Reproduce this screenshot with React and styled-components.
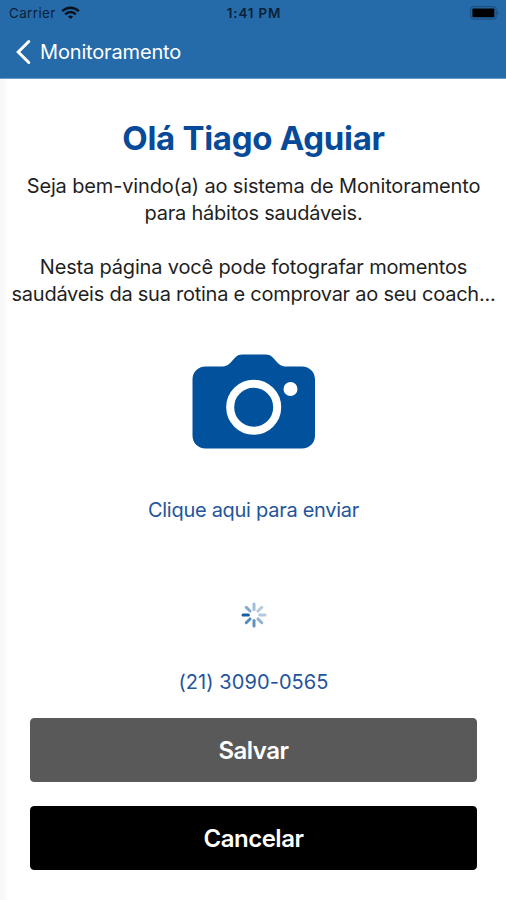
import React from 'react'
import styled, { createGlobalStyle } from 'styled-components'

const theme = {
    colors: {
        header: "#256ba9",
        primary: "#01519c",
        title: "#064a99",
        link: "#24559b",
        text: "#1f1f1f",
        grey: "#595959",
        black: "#000",
        white: "#fff",
    },
    font: "Inter, 'Liberation Sans', sans-serif",
}

// opacity of each spoke, clockwise from the top
const SPOKES = [0.4, 0.32, 0.32, 0.48, 0.68, 0.72, 1, 0.52]

export default function App() {
    return (
        <>
            <GlobalStyle />
            <Screen>
                <Header>
                    <StatusBar>
                        <Carrier>
                            <span>Carrier</span>
                            <WifiIcon />
                        </Carrier>
                        <Clock>1:41 PM</Clock>
                        <BatteryIcon />
                    </StatusBar>
                    <NavBar>
                        <BackIcon />
                        <NavTitle>Monitoramento</NavTitle>
                    </NavBar>
                </Header>
                <Content>
                    <Title>Olá Tiago Aguiar</Title>
                    <Intro>
                        <Line $spacing="-0.15px">Seja bem-vindo(a) ao sistema de Monitoramento</Line>
                        <Line $spacing="-0.23px">para hábitos saudáveis.</Line>
                        <Line />
                        <Line $spacing="-0.17px">Nesta página você pode fotografar momentos</Line>
                        <Line $spacing="-0.25px">saudáveis da sua rotina e comprovar ao seu coach...</Line>
                    </Intro>
                    <CameraButton aria-label="Fotografar"><CameraIcon /></CameraButton>
                    <SendLink>Clique aqui para enviar</SendLink>
                    <Loader />
                    <Phone>(21) 3090-0565</Phone>
                    <Actions>
                        <Button $color={theme.colors.grey}>Salvar</Button>
                        <Button $color={theme.colors.black}>Cancelar</Button>
                    </Actions>
                </Content>
            </Screen>
        </>
    )
}

function WifiIcon() {
    return (
        <svg width="19" height="14" viewBox="0 0 19 14" fill="none" stroke="#06131f">
            <path d="M1.2 5.2C5.9.5 13.1.5 17.8 5.2" strokeWidth="2.5" />
            <path d="M4.2 8.3C7.2 5.3 11.8 5.3 14.8 8.3" strokeWidth="2.4" />
            <path d="M9.5 13L6.9 10.5C8.3 9.1 10.7 9.1 12.1 10.5Z" fill="#06131f" stroke="none" />
        </svg>
    )
}

function BatteryIcon() {
    return (
        <svg width="29" height="14" viewBox="0 0 29 14">
            <rect x="0.6" y="0.6" width="25.6" height="12.6" rx="3.4" fill="none" stroke="#1b5182" strokeWidth="1.2" />
            <rect x="2.4" y="2.5" width="22" height="8.8" rx="0.8" fill="#000" />
            <path d="M27.2 4.8Q28.6 5.6 28.6 6.9T27.2 9Z" fill="#1b5182" />
        </svg>
    )
}

function BackIcon() {
    return (
        <svg width="16" height="26" viewBox="0 0 16 26" fill="none" stroke="#fff" strokeWidth="3">
            <path d="M13.8 2.5L3.2 13L13.8 23.5" strokeLinecap="round" />
        </svg>
    )
}

function CameraIcon() {
    return (
        <svg width="124" height="96" viewBox="0 0 124 96">
            <path
                d="M13.5 12.5H29C34.5 12.5 36.5 11 40 7L42.5 4.2C45 1.5 47 .5 50.5 .5H73.5C77 .5 79 1.5 81.5 4.2L84 7C87.5 11 89.5 12.5 95 12.5H110C117.5 12.5 123 18 123 25.5V81.5C123 89 117.5 94.5 110 94.5H13.5C6 94.5 .5 89 .5 81.5V25.5C.5 18 6 12.5 13.5 12.5Z"
                fill={theme.colors.primary}
            />
            <circle cx="61.7" cy="53.3" r="23.5" fill="none" stroke="#fff" strokeWidth="8" />
            <circle cx="98.5" cy="35" r="7" fill="#fff" />
        </svg>
    )
}

function Loader() {
    return (
        <LoaderStyled viewBox="-13 -13 26 26">
            {SPOKES.map((opacity, i) => (
                <line
                    key={i}
                    y1="-5.6"
                    y2="-11"
                    transform={`rotate(${i * 45})`}
                    opacity={opacity}
                />
            ))}
        </LoaderStyled>
    )
}

const GlobalStyle = createGlobalStyle`
* {
    box-sizing: border-box;
}
body {
    margin: 0;
    font-family: ${theme.font};
    background: ${theme.colors.white};
}
h1, p {
    margin: 0;
}
`;

const Screen = styled.div`
display: flex;
flex-direction: column;
width: 506px;
height: 900px;
overflow: hidden;
`;

const Header = styled.header`
height: 79px;
background: ${theme.colors.header};
border-bottom: 1px solid #6b9ac6;
`;

const StatusBar = styled.div`
display: grid;
grid-template-columns: 1fr auto 1fr;
align-items: center;
height: 26px;
padding: 0 7px 0 9px;
color: #0a2238;
font-size: 13.4px;
> svg {
    justify-self: end;
}
`;

const Carrier = styled.div`
display: flex;
align-items: center;
gap: 5px;
letter-spacing: 0.4px;
`;

const Clock = styled.span`
font-weight: 600;
letter-spacing: 0.85px;
`;

const NavBar = styled.div`
display: flex;
align-items: center;
gap: 9px;
height: 52px;
padding-left: 15px;
`;

const NavTitle = styled.span`
color: ${theme.colors.white};
font-size: 20px;
line-height: 26px;
letter-spacing: -0.16px;
`;

const Content = styled.main`
display: flex;
flex: 1;
flex-direction: column;
align-items: center;
padding-left: 1px;
background: linear-gradient(to right, #f7f7f7, #f9f9f9 4px, #fff 8px);
`;

const Title = styled.h1`
margin-top: 39px;
color: ${theme.colors.title};
font-size: 33px;
line-height: 40px;
font-weight: 700;
letter-spacing: -0.3px;
white-space: nowrap;
`;

const Intro = styled.div`
margin-top: 15px;
`;

const Line = styled.p`
height: 27px;
color: ${theme.colors.text};
font-size: 20px;
line-height: 27px;
text-align: center;
white-space: nowrap;
letter-spacing: ${({ $spacing }) => $spacing};
`;

const CameraButton = styled.button`
display: flex;
margin-top: 46px;
padding: 0;
border: 0;
background: none;
`;

const SendLink = styled.p`
margin-top: 46px;
color: ${theme.colors.link};
font-size: 20px;
line-height: 28px;
letter-spacing: -0.28px;
`;

const LoaderStyled = styled.svg`
width: 26px;
height: 26px;
margin-top: 78px;
stroke: #17609f;
stroke-width: 3px;
stroke-linecap: round;
`;

const Phone = styled.p`
margin-top: 40px;
color: ${theme.colors.link};
font-size: 20px;
line-height: 28px;
letter-spacing: 0.08px;
`;

const Actions = styled.div`
display: flex;
flex-direction: column;
gap: 24px;
width: 447px;
margin-top: 22px;
`;

const Button = styled.button`
height: 64px;
padding: 0;
border: 1px solid ${({ $color }) => $color};
border-radius: 4px;
background: ${({ $color }) => $color};
color: ${theme.colors.white};
font-family: ${theme.font};
font-size: 24px;
font-weight: 600;
letter-spacing: -0.5px;
`;
